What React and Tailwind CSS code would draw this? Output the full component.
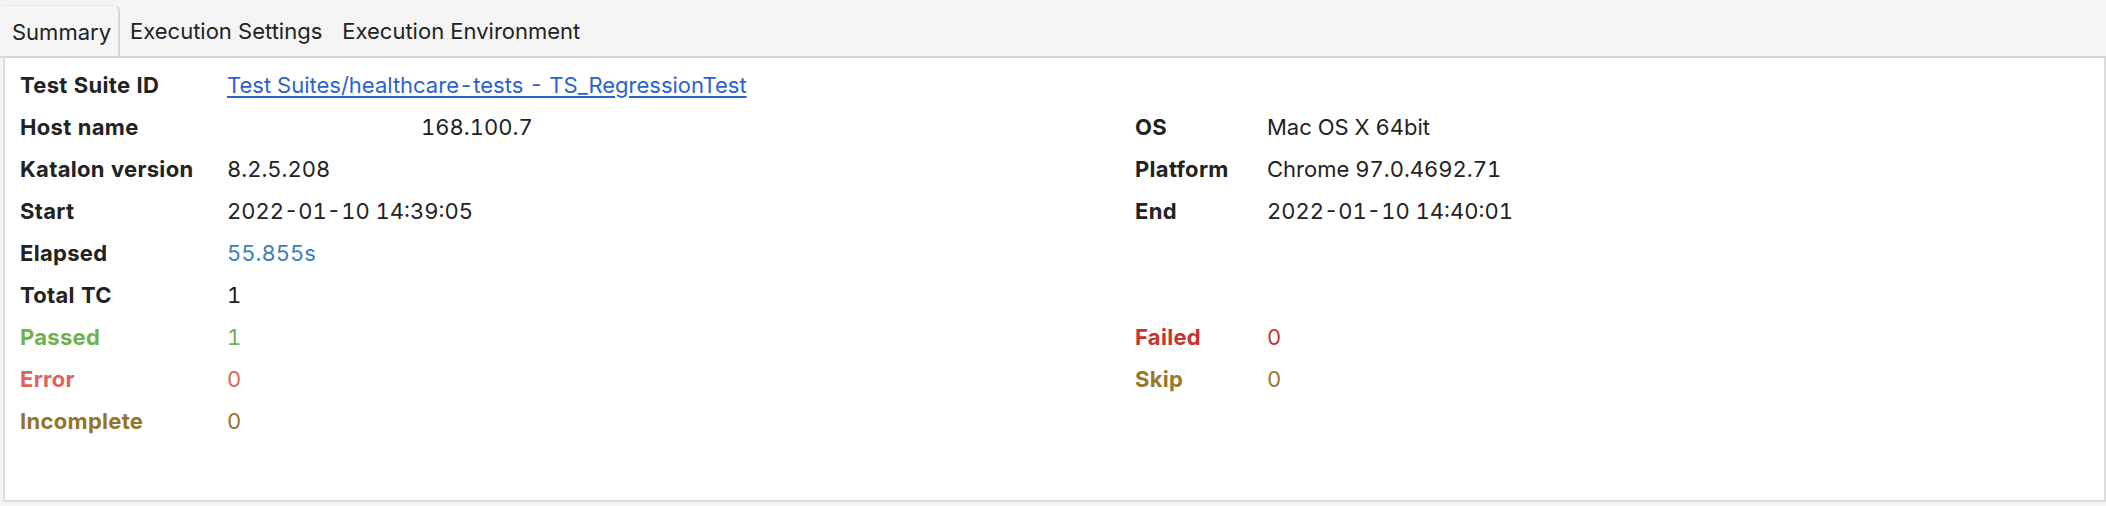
export default function App() {
  const font = { fontFamily: 'Inter, "Noto Sans", sans-serif' };
  const label = "font-bold tracking-[0.3px]";
  return (
    <div className="w-[2106px] h-[506px] bg-[#f4f4f4] text-[#222] text-[22px] flex flex-col" style={font}>
      <div className="h-[58px] flex items-end border-b-2 border-[#d5d5d5] pl-[2px]">
        <div className="h-[51px] w-[118px] flex items-center pl-[10px] pt-[2px] border-t border-r-2 border-[#d6d6d6] border-t-[#e8e8e8] rounded-tr-[6px] bg-[#f5f5f5]">
          Summary
        </div>
        <div className="h-[51px] flex items-center pt-[2px] pl-[10px]">Execution Settings</div>
        <div className="h-[51px] flex items-center pt-[2px] pl-[20px]">Execution Environment</div>
      </div>
      <div className="ml-[3px] h-[444px] bg-white border-x-2 border-b-2 border-[#dcdcdc] pt-[6px] pl-[15px]">
        <div className="grid grid-cols-[207px_908px_132px_1fr] auto-rows-[42px] items-center tabular-nums">
          <div className={label}>Test Suite ID</div>
          <div className="col-span-3">
            <span className="text-[#2a62d0] underline underline-offset-[3px]">Test Suites/healthcare-tests - TS_RegressionTest</span>
          </div>

          <div className={label}>Host name</div>
          <div className="pl-[194px]">168.100.7</div>
          <div className={label}>OS</div>
          <div>Mac OS X 64bit</div>

          <div className={label}>Katalon version</div>
          <div>8.2.5.208</div>
          <div className={label}>Platform</div>
          <div>Chrome 97.0.4692.71</div>

          <div className={label}>Start</div>
          <div>2022-01-10 14:39:05</div>
          <div className={label}>End</div>
          <div>2022-01-10 14:40:01</div>

          <div className={label}>Elapsed</div>
          <div className="col-span-3 text-[#3d80b8]">55.855s</div>

          <div className={label}>Total TC</div>
          <div className="col-span-3">1</div>

          <div className={`${label} text-[#6db24a]`}>Passed</div>
          <div className="text-[#6db24a]">1</div>
          <div className={`${label} text-[#c7332f]`}>Failed</div>
          <div className="text-[#c7332f]">0</div>

          <div className={`${label} text-[#e0635a]`}>Error</div>
          <div className="text-[#e0635a]">0</div>
          <div className={`${label} text-[#98782c]`}>Skip</div>
          <div className="text-[#98782c]">0</div>

          <div className={`${label} text-[#93742a]`}>Incomplete</div>
          <div className="col-span-3 text-[#93742a]">0</div>
        </div>
      </div>
    </div>
  );
}
